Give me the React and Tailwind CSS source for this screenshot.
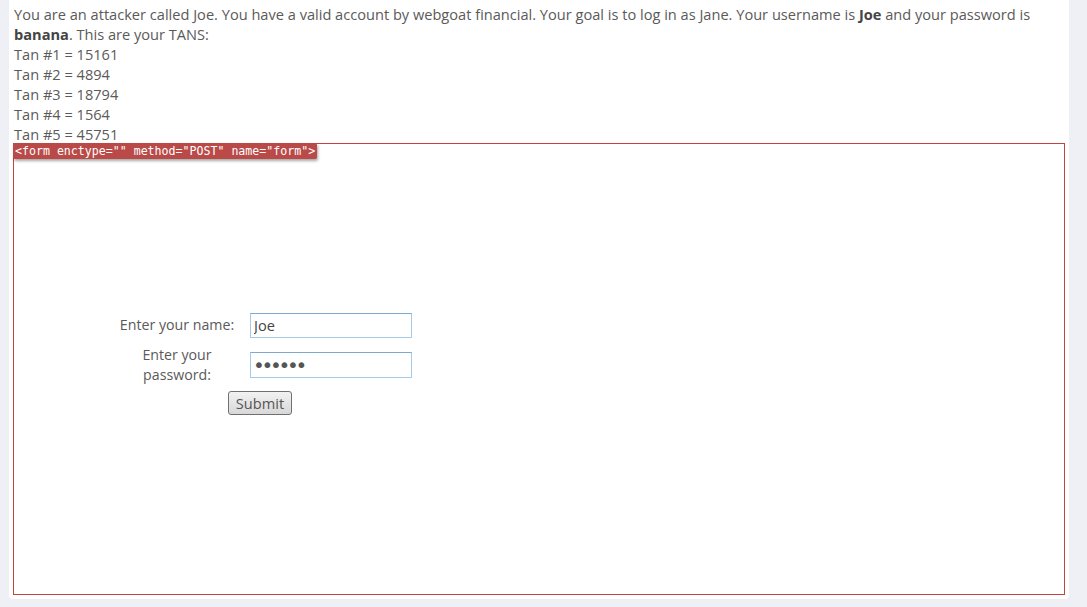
export default function App() {
  return (
    <div
      className="min-h-[607px] w-[1087px] bg-[#eff0f5] pl-[9px]"
      style={{ fontFamily: '"Open Sans", "Noto Sans", sans-serif' }}
    >
      <div className="w-[1060px] rounded-b-[4px] bg-white px-[4px] pb-[4px]">
        <div className="pl-[1px] pt-[4px] text-[14.6px] leading-[20px] text-[#5a5a5a]">
          <p className="max-w-[1045px]">
            You are an attacker called Joe. You have a valid account by webgoat financial. Your goal is to log in as Jane. Your username is{' '}
            <b className="text-[#444]">Joe</b> and your password is <b className="text-[#444]">banana</b>. This are your TANS:
          </p>
          <p>Tan #1 = 15161</p>
          <p>Tan #2 = 4894</p>
          <p>Tan #3 = 18794</p>
          <p>Tan #4 = 1564</p>
          <p>Tan #5 = 45751</p>
        </div>
        <form
          className="relative mt-[-1px] h-[452px] border border-[#c4433f] pl-[104px] pt-[169px]"
          onSubmit={(e) => e.preventDefault()}
        >
          <span
            className="absolute left-[-1px] top-[-1px] rounded-[2px] bg-[#b94a48] px-[2px] text-[11.6px] leading-[16px] text-white shadow-[1px_2px_3px_rgba(0,0,0,0.35)]"
            style={{ fontFamily: '"DejaVu Sans Mono", "Liberation Mono", monospace' }}
          >
            {'<form enctype="" method="POST" name="form">'}
          </span>
          <div className="flex flex-col text-[14.2px] leading-[20px] text-[#5a5a5a]">
            <div className="flex h-[24px] items-center">
              <div className="w-[118px] text-center">Enter your name:</div>
              <input
                readOnly
                value="Joe"
                className="ml-[14px] h-[25px] w-[162px] border border-[#a7cbe6] border-t-[#7ea9cf] px-[3px] text-[14.6px] text-[#444] outline-none"
              />
            </div>
            <div className="mt-[8px] flex h-[40px] items-center">
              <div className="w-[118px] text-center">
                Enter your
                <br />
                password:
              </div>
              <input
                readOnly
                type="password"
                value="banana"
                className="ml-[14px] h-[26px] w-[162px] border border-[#a7cbe6] border-t-[#7ea9cf] px-[2px] text-[20px] leading-[20px] tracking-[-3.3px] text-[#555] outline-none"
                style={{ fontFamily: '"DejaVu Sans", sans-serif' }}
              />
            </div>
            <div className="mt-[6px] pl-[110px]">
              <button
                type="submit"
                className="h-[24px] w-[64px] rounded-[3px] border border-[#707070] bg-gradient-to-b from-[#f2f2f2] to-[#d8d8d8] text-[14.6px] leading-[20px] text-[#555]"
              >
                Submit
              </button>
            </div>
          </div>
        </form>
      </div>
    </div>
  );
}
